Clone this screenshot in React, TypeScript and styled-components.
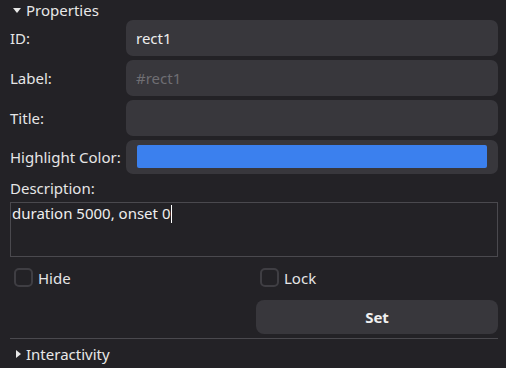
import styled, { createGlobalStyle } from 'styled-components';

const GlobalStyle = createGlobalStyle`
  html, body {
    margin: 0;
    padding: 0;
    background: #232226;
  }
  body {
    font-family: 'Noto Sans', 'Open Sans', sans-serif;
    font-size: 15px;
    color: #e6e6e6;
  }
`;

const Panel = styled.div`
  width: 506px;
  height: 368px;
  overflow: hidden;
  padding: 0 8px 0 10px;
  box-sizing: border-box;
  display: flex;
  flex-direction: column;
`;

const SectionHeader = styled.div<{ $open?: boolean }>`
  display: flex;
  align-items: center;
  gap: 5px;
  height: 20px;
  padding-left: ${(p) => (p.$open ? '3px' : '6px')};
  color: #e8e8e8;
`;

const Caret = styled.span<{ $open?: boolean }>`
  width: 0;
  height: 0;
  ${(p) =>
    p.$open
      ? `border-left: 4px solid transparent;
         border-right: 4px solid transparent;
         border-top: 5px solid #e8e8e8;`
      : `border-top: 4px solid transparent;
         border-bottom: 4px solid transparent;
         border-left: 5px solid #e8e8e8;`}
`;

const FieldGrid = styled.div`
  display: grid;
  grid-template-columns: 116px 1fr;
  row-gap: 4px;
  align-items: center;
`;

const FieldLabel = styled.label`
  color: #e6e6e6;
  white-space: nowrap;
`;

const TextInput = styled.input`
  height: 36px;
  box-sizing: border-box;
  border: none;
  border-radius: 7px;
  background: #38373c;
  color: #eeeeee;
  font: inherit;
  padding: 0 10px;
  outline: none;
  &::placeholder {
    color: #6f6e73;
  }
`;

const ColorWell = styled.div`
  height: 34px;
  box-sizing: border-box;
  border-radius: 7px;
  background: #38373c;
  padding: 5px 11px 6px 11px;
  display: flex;
`;

const Swatch = styled.div<{ $color: string }>`
  flex: 1;
  border-radius: 2px;
  background: ${(p) => p.$color};
`;

const DescLabel = styled.div`
  height: 28px;
  display: flex;
  align-items: center;
`;

const TextArea = styled.div`
  height: 55px;
  box-sizing: border-box;
  border: 1px solid #4a494e;
  padding: 0 1px;
  color: #eeeeee;
  line-height: 21px;
`;

const Cursor = styled.span`
  display: inline-block;
  width: 1px;
  height: 18px;
  background: #ffffff;
  vertical-align: -4px;
  margin-left: 1px;
`;

const TwoCol = styled.div`
  display: grid;
  grid-template-columns: 1fr 1fr;
  column-gap: 4px;
`;

const CheckRow = styled(TwoCol)`
  height: 43px;
  box-sizing: border-box;
  padding-top: 11px;
  align-items: start;
`;

const Check = styled.label`
  display: flex;
  align-items: center;
  gap: 5px;
  padding-left: 4px;
  height: 19px;
`;

const Box = styled.span`
  width: 19px;
  height: 19px;
  box-sizing: border-box;
  border: 2px solid #3f3e43;
  border-radius: 5px;
`;

const SetButton = styled.button`
  grid-column: 2;
  height: 34px;
  border: none;
  border-radius: 8px;
  background: #38373c;
  color: #f0f0f0;
  font: inherit;
  font-weight: 700;
`;

const Divider = styled.hr`
  border: none;
  border-top: 1px solid #4a494e;
  margin: 4px 0 0 0;
`;

const Footer = styled.div`
  padding-top: 5px;
`;

export default function App() {
  return (
    <>
      <GlobalStyle />
      <Panel>
        <SectionHeader $open>
          <Caret $open />
          Properties
        </SectionHeader>
        <FieldGrid>
          <FieldLabel>ID:</FieldLabel>
          <TextInput defaultValue="rect1" />
          <FieldLabel>Label:</FieldLabel>
          <TextInput placeholder="#rect1" />
          <FieldLabel>Title:</FieldLabel>
          <TextInput />
          <FieldLabel>Highlight Color:</FieldLabel>
          <ColorWell>
            <Swatch $color="#3b80ee" />
          </ColorWell>
        </FieldGrid>
        <DescLabel>Description:</DescLabel>
        <TextArea>
          duration 5000, onset 0
          <Cursor />
        </TextArea>
        <CheckRow>
          <Check>
            <Box />
            Hide
          </Check>
          <Check>
            <Box />
            Lock
          </Check>
        </CheckRow>
        <TwoCol>
          <SetButton>Set</SetButton>
        </TwoCol>
        <Divider />
        <Footer>
          <SectionHeader>
            <Caret />
            Interactivity
          </SectionHeader>
        </Footer>
      </Panel>
    </>
  );
}
